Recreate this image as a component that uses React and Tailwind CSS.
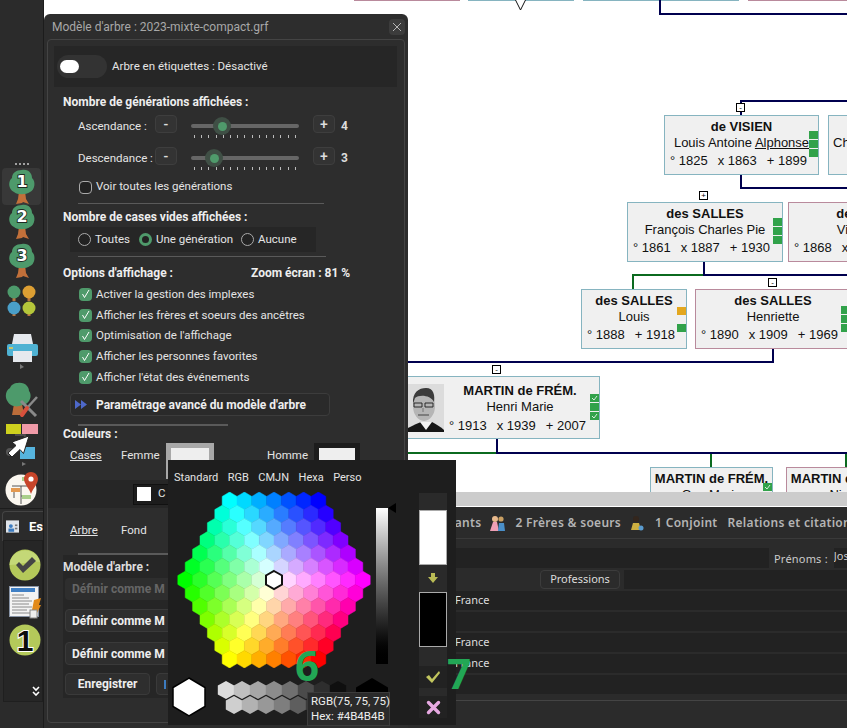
import React from "react"

const UI = "font-['Roboto',sans-serif]"

function Hex({ x, y, w, h, fill, ...rest }) {
  const pts = [
    [x, y - h / 2],
    [x + w / 2, y - h / 4],
    [x + w / 2, y + h / 4],
    [x, y + h / 2],
    [x - w / 2, y + h / 4],
    [x - w / 2, y - h / 4],
  ]
  return <polygon points={pts.map((p) => p.join(",")).join(" ")} fill={fill} {...rest} />
}

function hueColor(h, s) {
  const hh = ((h % 360) + 360) % 360
  const f = (n) => {
    const k = (n + hh / 60) % 6
    return 1 - s * Math.max(0, Math.min(k, 4 - k, 1))
  }
  return `rgb(${Math.round(f(5) * 255)},${Math.round(f(3) * 255)},${Math.round(f(1) * 255)})`
}

function ColorWheel() {
  const w = 14.8
  const dy = 13.2
  const cx = 98
  const cy = 88
  const cells = []
  for (let r = -6; r <= 6; r++) {
    const count = 13 - Math.abs(r)
    for (let i = 0; i < count; i++) {
      const off = i - (count - 1) / 2
      const dist = Math.max(Math.abs(r), Math.abs(off) + Math.abs(r) / 2)
      const angle = (Math.atan2(-r * 0.866, off) * 180) / Math.PI
      const c = hueColor(300 - angle, dist / 6)
      cells.push(<Hex key={`${r}-${i}`} x={cx + off * w} y={cy + r * dy} w={w} h={17.6} fill={c} stroke={c} strokeWidth="0.5" />)
    }
  }
  return (
    <svg width="200" height="176" className="shrink-0">
      {cells}
      <Hex x={cx} y={cy} w={16} h={18} fill="#fff" stroke="#111" strokeWidth="2" />
    </svg>
  )
}

function GrayHexes() {
  const top = ["#dcdcdc", "#c0c0c0", "#a6a6a6", "#8c8c8c", "#707070", "#4b4b4b", "#2e2e2e", "#0f0f0f"]
  const bottom = ["#cfcfcf", "#b2b2b2", "#989898", "#7e7e7e", "#5e5e5e", "#3c3c3c"]
  return (
    <svg width="224" height="46" className="shrink-0">
      <Hex x={17} y={21} w={32} h={38} fill="#fff" stroke="#000" strokeWidth="1.5" />
      {top.map((c, i) => (
        <Hex key={c} x={54 + i * 16} y={14} w={16.4} h={18} fill={c} />
      ))}
      {bottom.map((c, i) => (
        <Hex key={c} x={62 + i * 16} y={29} w={16.4} h={18} fill={c} />
      ))}
      <Hex x={200} y={21} w={32} h={38} fill="#000" />
    </svg>
  )
}

function TreeIcon({ n }) {
  return (
    <svg width="28" height="36" viewBox="0 0 28 36">
      <path d="M11 22 L17 22 L18 30 L21 35 L15 33 L14 34 L8 35 L10 30 Z" fill="#c2703a" />
      <path d="M14 1 C21 0 24 5 24 9 C28 12 27 21 22 23 C18 26 9 26 6 23 C0 20 0 12 4 9 C4 4 8 1 14 1 Z" fill="#4d9a6b" />
      <text
        x="14"
        y="18"
        textAnchor="middle"
        fontSize="16"
        fontWeight="700"
        fontFamily="DejaVu Sans, sans-serif"
        fill="#fff"
        stroke="#1d2b22"
        strokeWidth="1.8"
        paintOrder="stroke"
      >
        {n}
      </text>
    </svg>
  )
}

function FourTrees() {
  const small = [
    [14, 10, "#4d9a6b"],
    [29, 10, "#dd9f33"],
    [14, 26, "#4a9fc9"],
    [29, 26, "#b5c63a"],
  ]
  return (
    <svg width="30" height="32" viewBox="7 1 30 32">
      {small.map(([x, y, c]) => (
        <g key={c}>
          <rect x={x - 1.5} y={y + 3} width="3" height="5" fill="#b8743f" />
          <circle cx={x} cy={y - 1} r="6.5" fill={c} />
        </g>
      ))}
    </svg>
  )
}

function PrinterIcon() {
  return (
    <svg width="32" height="36" viewBox="0 0 32 36">
      <path d="M8 1 H25 L27 11 H6 Z" fill="#e6e9ee" />
      <rect x="1" y="11" width="31" height="12" rx="2" fill="#4fb2d3" />
      <rect x="3" y="14" width="4" height="2" fill="#c9c66b" />
      <rect x="7" y="18" width="19" height="11" fill="#e6e9ee" />
      <path d="M14 31 L18 34 L14 36 Z" fill="#777" />
    </svg>
  )
}

function ToolsTree() {
  return (
    <svg width="34" height="36" viewBox="0 0 34 36">
      <path d="M9 22 H17 L19 33 H7 Z" fill="#bb6d3a" />
      <path d="M13 1 C20 0 24 5 24 9 C28 14 24 23 17 23 C12 26 5 24 3 20 C-1 15 1 8 5 6 C6 3 9 1 13 1 Z" fill="#4d9a6b" />
      <path d="M16 19 L31 34" stroke="#8a8a8a" strokeWidth="3" />
      <path d="M32 15 L22 26" stroke="#8a8a8a" strokeWidth="2.5" />
      <path d="M22 26 L17 33" stroke="#d8503c" strokeWidth="4" strokeLinecap="round" />
    </svg>
  )
}

function BoxesCursor() {
  return (
    <svg width="34" height="42" viewBox="0 0 34 42">
      <rect x="1" y="0" width="15" height="10" fill="#ced11e" />
      <rect x="17" y="0" width="16" height="10" fill="#f09aa8" />
      <rect x="15" y="23" width="15" height="12" fill="#56b4de" />
      <path d="M10 11 H20 V22" stroke="#555" strokeWidth="1.5" fill="none" />
      <circle cx="5" cy="28" r="4" fill="#555" />
      <path d="M24 12 L7 18 L11 21.5 L3 29 L7 33 L15 25.5 L18.5 29.5 Z" fill="#fff" stroke="#222" strokeWidth="1" />
      <path d="M17 38 L21 40 L17 42 Z" fill="#777" />
    </svg>
  )
}

function MapIcon() {
  return (
    <svg width="34" height="34" viewBox="0 0 34 34">
      <circle cx="16" cy="18" r="15.5" fill="#fbf7ef" />
      <path d="M7 14 H22 M16 14 V32 M9 18 V26 M16 24 H24" stroke="#555" strokeWidth="1" fill="none" />
      <rect x="6" y="16" width="9" height="4" fill="#e4994f" />
      <rect x="17" y="5" width="8" height="4" fill="#a9cf8a" />
      <rect x="17" y="23" width="9" height="4" fill="#a9cf8a" />
      <path d="M26 0 C31 0 33 4 33 7 C33 12 28 16 26 22 C24 16 19 12 19 7 C19 4 21 0 26 0 Z" fill="#c7452a" />
      <circle cx="26" cy="7" r="2.6" fill="#fff" />
    </svg>
  )
}

function CheckBall() {
  return (
    <svg width="32" height="32" viewBox="0 0 32 32">
      <circle cx="16" cy="16" r="15.5" fill="#b4c95a" />
      <path d="M0.5 16 A15.5 15.5 0 0 1 31 13 C20 12 10 16 0.5 16 Z" fill="#c4d877" />
      <path d="M7 16 L10 13 L14 17 L23 8 L27 12 L14 24 Z" fill="#454545" />
    </svg>
  )
}

function DocIcon() {
  return (
    <svg width="32" height="33" viewBox="0 0 32 33">
      <rect x="0.5" y="0.5" width="29" height="30" fill="#f3f3f3" stroke="#8793a5" />
      <rect x="2" y="2" width="24" height="4" fill="#3f7fc4" />
      <path d="M3 9 H15 M3 12 H20 M3 15 H23 M3 18 H20 M3 21 H23 M3 24 H18 M3 27 H21" stroke="#8a8a8a" strokeWidth="1" />
      <path d="M25 14 L32 12 L30 19 L32 19 L25 33 L26 24 L23 24 Z" fill="#e28a1a" />
      <rect x="21" y="24" width="7" height="8" fill="#eee" stroke="#888" />
    </svg>
  )
}

function OneBall() {
  return (
    <svg width="32" height="32" viewBox="0 0 32 32">
      <circle cx="16" cy="16" r="15.5" fill="#b4c95a" />
      <text
        x="16"
        y="27"
        textAnchor="middle"
        fontSize="30"
        fontWeight="700"
        fontFamily="Liberation Sans, sans-serif"
        fill="#0c0c0c"
        stroke="#fff"
        strokeWidth="2"
        paintOrder="stroke"
      >
        1
      </text>
    </svg>
  )
}

function Sidebar() {
  return (
    <div className={`absolute left-0 top-0 w-[44px] h-[728px] bg-[#2b2b2b] border-r border-[#1c1c1c] flex flex-col items-center ${UI}`}>
      <div className="mt-[163px] h-[2px] w-[14px] border-t-2 border-dotted border-[#a0a0a0]" />
      <div className="mt-[3px] w-[39px] h-[37px] rounded bg-[#383838] flex items-center justify-center">
        <TreeIcon n="1" />
      </div>
      <div className="mt-[-1px]">
        <TreeIcon n="2" />
      </div>
      <div className="mt-[3px]">
        <TreeIcon n="3" />
      </div>
      <div className="mt-[5px]">
        <FourTrees />
      </div>
      <div className="mt-[17px]">
        <PrinterIcon />
      </div>
      <div className="mt-[13px] ml-[1px]">
        <ToolsTree />
      </div>
      <div className="mt-[6px]">
        <BoxesCursor />
      </div>
      <div className="mt-[6px]">
        <MapIcon />
      </div>
      <div className="mt-[2px] w-full h-[32px] border-t border-[#1c1c1c] pl-[2px]">
        <div className="mt-[2px] h-[30px] border-l border-t border-[#444] rounded-tl flex items-center pl-[3px] gap-[10px]">
          <svg width="16" height="15" viewBox="0 0 16 15">
            <rect width="16" height="15" fill="#dfe4ea" />
            <circle cx="6" cy="7" r="2.4" fill="#3d7cc0" />
            <rect x="3" y="10" width="7" height="4" fill="#3d7cc0" />
            <rect x="11" y="5" width="3" height="2" fill="#777" />
            <rect x="11" y="9" width="3" height="2" fill="#777" />
          </svg>
          <span className="text-[13px] font-bold text-white">Es</span>
        </div>
      </div>
      <div className="w-[40px] ml-[2px] h-[162px] border border-[#1f1f1f] bg-[#262626] flex flex-col items-end pr-[1px]">
        <div className="mt-[8px]">
          <CheckBall />
        </div>
        <div className="mt-[5px]">
          <DocIcon />
        </div>
        <div className="mt-[5px]">
          <OneBall />
        </div>
        <svg className="mt-[30px] mr-[1px]" width="8" height="10" viewBox="0 0 8 10">
          <path d="M1 1 L4 4 L7 1 M1 6 L4 9 L7 6" stroke="#fff" strokeWidth="1.6" fill="none" />
        </svg>
      </div>
    </div>
  )
}

function SmallButton({ label }) {
  return (
    <div className="w-[22px] h-[18px] -mt-[4px] rounded bg-[#333] border border-[#3e3e3e] flex items-center justify-center text-[14px] font-medium leading-none text-[#ddd]">
      {label}
    </div>
  )
}

function SliderRow({ label, value, pos }) {
  const ticks = Array.from({ length: 15 })
  return (
    <div className="h-[32px] flex items-center">
      <span className="ml-[30px] mt-px w-[77px] text-[11.5px] whitespace-nowrap text-[#e4e4e4]">{label}</span>
      <SmallButton label="-" />
      <div className="relative ml-[14px] w-[108px] h-[4px] rounded-full bg-[#666]">
        <div className={`absolute -top-[7px] w-[18px] h-[18px] rounded-full bg-[#3f4f45] flex items-center justify-center ${pos}`}>
          <div className="w-[9px] h-[9px] rounded-full bg-[#4f9a6b]" />
        </div>
        <div className="absolute left-[3px] right-[3px] top-[11px] flex justify-between">
          {ticks.map((_, i) => (
            <div key={i} className="w-px h-[3px] bg-[#bbb]" />
          ))}
        </div>
      </div>
      <div className="ml-[14px]">
        <SmallButton label="+" />
      </div>
      <span className="ml-[6px] text-[12px] font-bold text-[#ddd]">{value}</span>
    </div>
  )
}

function Check() {
  return (
    <div className="w-[13px] h-[13px] rounded-sm bg-[#4f9a6b] flex items-center justify-center shrink-0">
      <svg width="9" height="10" viewBox="0 0 9 10">
        <path d="M1.5 5 L3.5 8.5 L8 1" stroke="#fff" strokeWidth="1" fill="none" />
      </svg>
    </div>
  )
}

function Radio({ checked, label, width }) {
  return (
    <div className={`flex items-center gap-[4px] ${width}`}>
      {checked ? (
        <div className="w-[13px] h-[13px] rounded-full border-[3px] border-[#4f9a6b] bg-[#222]" />
      ) : (
        <div className="w-[13px] h-[13px] rounded-full border border-[#aaa] bg-[#222]" />
      )}
      <span className="text-[11.5px] text-[#e4e4e4] whitespace-nowrap">{label}</span>
    </div>
  )
}

const displayOptions = [
  "Activer la gestion des implexes",
  "Afficher les frères et soeurs des ancêtres",
  "Optimisation de l'affichage",
  "Afficher les personnes favorites",
  "Afficher l'état des événements",
]

function ModelPanel() {
  return (
    <div className={`absolute left-[44px] top-[14px] w-[364px] h-[714px] rounded-t-md bg-[#2d2d2d] ${UI}`}>
      <div className="h-[25px] pl-[8px] pr-[3px] flex items-center justify-between">
        <span className="text-[12px] text-[#a8a8a8]">Modèle d'arbre : 2023-mixte-compact.grf</span>
        <div className="w-[16px] h-[16px] rounded-sm bg-[#3c3c3c] flex items-center justify-center">
          <svg width="10" height="10" viewBox="0 0 10 10">
            <path d="M1 1 L9 9 M9 1 L1 9" stroke="#b5b5b5" strokeWidth="1" />
          </svg>
        </div>
      </div>

      <div className="mx-[3px] h-[684px] border border-[#444] rounded-sm">
        <div className="mt-[6px] ml-[6px] w-[343px] h-[41px] bg-[#262626] flex items-center pl-[3px]">
          <div className="w-[50px] h-[23px] rounded-full bg-[#333] flex items-center pl-[3px]">
            <div className="w-[19px] h-[13px] rounded-full bg-white" />
          </div>
          <span className="ml-[5px] mt-px text-[11.5px] text-[#e4e4e4]">Arbre en étiquettes : Désactivé</span>
        </div>

        <div className="mt-[7px] ml-[15px] h-[16px] flex items-center text-[12px] font-bold text-[#eee]">
          Nombre de générations affichées :
        </div>
        <SliderRow label="Ascendance :" value="4" pos="left-[22px]" />
        <SliderRow label="Descendance :" value="3" pos="left-[14px]" />
        <div className="h-[26px] ml-[31px] flex items-center gap-[4px]">
          <div className="w-[13px] h-[13px] rounded-sm border border-[#aaa] bg-[#222]" />
          <span className="text-[11.5px] text-[#e4e4e4]">Voir toutes les générations</span>
        </div>
        <div className="mt-[3px] ml-[30px] w-[246px] h-px bg-[#5a5a5a]" />

        <div className="mt-[5px] ml-[15px] h-[16px] flex items-center text-[12px] font-bold text-[#eee]">
          Nombre de cases vides affichées :
        </div>
        <div className="mt-[2px] ml-[22px] w-[246px] h-[25px] bg-[#262626] flex items-center pl-[8px]">
          <Radio label="Toutes" width="w-[61px]" />
          <Radio checked label="Une génération" width="w-[102px]" />
          <Radio label="Aucune" width="w-[70px]" />
        </div>
        <div className="mt-[4px] ml-[30px] w-[248px] h-px bg-[#5a5a5a]" />

        <div className="mt-[8px] ml-[15px] h-[16px] flex items-center text-[12px] font-bold text-[#eee]">
          <span className="w-[188px]">Options d'affichage :</span>
          <span>Zoom écran : 81 %</span>
        </div>
        <div className="mt-[3px] ml-[31px] flex flex-col">
          {displayOptions.map((o) => (
            <div key={o} className="h-[20.75px] flex items-center gap-[4px]">
              <Check />
              <span className="text-[11.5px] text-[#e4e4e4]">{o}</span>
            </div>
          ))}
        </div>

        <div className="mt-[5.25px] ml-[22px] w-[260px] h-[23px] rounded bg-[#2a2a2a] border border-[#3c3c3c] flex items-center pl-[4px]">
          <svg width="12" height="9" viewBox="0 0 12 9">
            <path d="M0 0 L6 4.5 L0 9 Z M6 0 L12 4.5 L6 9 Z" fill="#4d68c9" />
          </svg>
          <span className="ml-[9px] text-[12px] font-bold whitespace-nowrap text-[#eee]">Paramétrage avancé du modèle d'arbre</span>
        </div>
        <div className="mt-[8px] ml-[30px] w-[150px] h-[2px] bg-[#5a5a5a]" />

        <div className="ml-[15px] h-[15px] flex items-center text-[12px] font-bold text-[#eee]">Couleurs :</div>
        <div className="h-[39px] flex items-start">
          <span className="ml-[22px] mt-[6px] w-[51px] text-[11.5px] text-[#e4e4e4] underline">Cases</span>
          <span className="mt-[6px] w-[45px] text-[11.5px] text-[#e4e4e4]">Femme</span>
          <div className="mt-[2px] w-[48px] h-[36px] bg-[#a8a8a8] p-[5px]">
            <div className="h-full bg-[#eeeeee]" />
          </div>
          <span className="ml-[53px] mt-[6px] w-[47px] text-[11.5px] text-[#e4e4e4]">Homme</span>
          <div className="mt-[2px] w-[46px] h-[36px] bg-[#1c1c1c] p-[5px]">
            <div className="h-full bg-[#eeeeee]" />
          </div>
        </div>

        <div className="h-[28px] bg-[#262626] flex items-center pl-[85px]">
          <div className="w-[160px] h-[21px] bg-[#1c1c1c] border border-[#111] flex items-center pl-[3px] gap-[7px]">
            <div className="w-[14px] h-[14px] bg-white" />
            <span className="text-[11.5px] text-[#e4e4e4]">C</span>
          </div>
        </div>

        <div className="h-[45px] flex items-center text-[11.5px] text-[#e4e4e4]">
          <span className="ml-[22px] w-[51px] underline">Arbre</span>
          <span>Fond</span>
        </div>
        <div className="ml-[30px] w-[248px] h-[2px] bg-[#5a5a5a]" />

        <div className="ml-[15px] w-[330px] h-[143px] bg-[#262626] flex flex-col">
          <div className="h-[23px] flex items-center text-[12px] font-bold text-[#ddd]">Modèle d'arbre :</div>
          <div className="ml-[2px] w-[300px] h-[22px] rounded bg-[#2e2e2e] pl-[7px] flex items-center text-[12px] font-bold text-[#666]">
            Définir comme M
          </div>
          <div className="mt-[9px] ml-[2px] w-[300px] h-[23px] rounded bg-[#2e2e2e] border border-[#3a3a3a] pl-[6px] flex items-center text-[12px] font-bold text-[#eee]">
            Définir comme M
          </div>
          <div className="mt-[10px] ml-[2px] w-[300px] h-[23px] rounded bg-[#2e2e2e] border border-[#3a3a3a] pl-[6px] flex items-center text-[12px] font-bold text-[#eee]">
            Définir comme M
          </div>
          <div className="mt-[8px] ml-[2px] flex gap-[6px]">
            <div className="w-[85px] h-[22px] rounded bg-[#2e2e2e] border border-[#3a3a3a] flex items-center justify-center text-[12px] font-bold text-[#eee]">
              Enregistrer
            </div>
            <div className="w-[120px] h-[22px] rounded bg-[#2e2e2e] border border-[#3a3a3a] pl-[7px] flex items-center">
              <div className="w-[2px] h-[9px] bg-[#3d7cc0]" />
            </div>
          </div>
        </div>
      </div>
    </div>
  )
}

function ColorPicker() {
  return (
    <div className={`absolute left-[168px] top-[460px] w-[288px] h-[265px] bg-[#1e1e1e] flex ${UI}`}>
      <div className="w-[251px] flex flex-col">
        <div className="h-[32px] pl-[6px] pt-[5px] flex items-center gap-[9.5px] text-[11px] text-[#e4e4e4]">
          <span>Standard</span>
          <span>RGB</span>
          <span>CMJN</span>
          <span>Hexa</span>
          <span>Perso</span>
        </div>
        <div className="h-[184px] pl-[8px] flex">
          <ColorWheel />
          <div className="relative mt-[16px] w-[12px] h-[156px] bg-gradient-to-b from-white to-black">
            <div className="absolute left-[12px] -top-[5px] w-0 h-0 border-y-[5px] border-y-transparent border-r-[8px] border-r-black" />
          </div>
        </div>
        <div className="pl-[4px]">
          <GrayHexes />
        </div>
      </div>
      <div className="mt-[33px] w-[28px] h-[225px] bg-[#2a2a2a] flex flex-col items-center">
        <div className="mt-[17px] w-full h-[55px] bg-white border border-[#aaa]" />
        <svg className="mt-[7px]" width="12" height="12" viewBox="0 0 12 12">
          <path d="M4 1 H8 V5 H11 L6 11 L1 5 H4 Z" fill="#b9bb55" />
        </svg>
        <div className="mt-[8px] w-full h-[55px] bg-black border border-[#aaa]" />
        <div className="mt-[19px] w-full h-[22px] bg-[#222] flex items-center justify-center">
          <svg width="16" height="14" viewBox="0 0 16 14">
            <path d="M1 7 L4 5 L7 9 L14 1 L15 3 L7 13 Z" fill="#c2c65e" />
          </svg>
        </div>
        <div className="mt-[8px] w-full h-[22px] bg-[#222] flex items-center justify-center">
          <svg width="15" height="15" viewBox="0 0 15 15">
            <path d="M2.5 2.5 L12.5 12.5 M12.5 2.5 L2.5 12.5" stroke="#e7a9e2" strokeWidth="3.4" strokeLinecap="round" />
          </svg>
        </div>
      </div>

      <div className="absolute left-[139px] top-[232px] w-[83px] h-[34px] bg-[#2a2a2a] border border-[#3c3c3c] pl-[3px] text-[11.5px] leading-[15px] whitespace-nowrap text-[#eee] flex flex-col justify-center">
        <span>RGB(75, 75, 75)</span>
        <span>Hex: #4B4B4B</span>
      </div>
    </div>
  )
}

function DetailWindow() {
  const rows = ["France", "", "France", "France", ""]
  return (
    <div className="absolute left-[408px] right-0 top-[492px] bottom-0 bg-[#2b2b2b] font-['Noto_Sans',sans-serif]">
      <div className="h-[15px] bg-[#cccccc] border-b border-white" />
      <div className="h-[32px] border-b border-[#3a3a3a] overflow-hidden flex items-center pl-[27px] text-xs font-semibold text-[#b4b4b4] whitespace-nowrap tracking-[0.3px]">
        <span>Enfants</span>
        <svg className="ml-[8px] shrink-0" width="17" height="16" viewBox="0 0 17 16">
          <circle cx="6" cy="4" r="3" fill="#e8b98c" />
          <path d="M1 16 L4 7 H8 L10 16 Z" fill="#ee9fb4" />
          <circle cx="12" cy="4" r="2.6" fill="#caa063" />
          <path d="M9 16 L10 8 H15 L16 16 Z" fill="#4a8fc9" />
        </svg>
        <span className="ml-[9px]">2 Frères &amp; soeurs</span>
        <svg className="ml-[9px] shrink-0" width="14" height="16" viewBox="0 0 14 16">
          <circle cx="6" cy="4" r="3" fill="#33261d" />
          <path d="M1 15 L3 8 H9 L11 15 Z" fill="#cdb041" />
          <circle cx="11" cy="13" r="2.5" fill="#5a9bcf" />
        </svg>
        <span className="ml-[11px]">1 Conjoint</span>
        <span className="ml-[10px]">Relations et citations</span>
      </div>
      <div className="mt-[9px] h-[20px] flex items-center">
        <div className="w-[361px] h-full bg-[#222]" />
        <span className="ml-[5px] mt-[2px] text-[11px] tracking-[0.2px] text-[#ccc] whitespace-nowrap">Prénoms :</span>
        <div className="ml-[6px] flex-1 h-full bg-[#222] text-[11px] text-[#ccc] overflow-hidden">Jos</div>
      </div>
      <div className="mt-[2px] h-[19px] flex">
        <div className="ml-[132px] w-[80px] rounded border border-[#3c3c3c] bg-[#2b2b2b] flex items-center justify-center text-[11px] text-[#ddd]">
          Professions
        </div>
        <div className="ml-[4px] flex-1 bg-[#222]" />
      </div>
      {rows.map((r, i) => (
        <div key={i} className="mt-[2px] h-[19px] bg-[#222] pl-[47px] flex items-center text-[11px] text-[#ddd]">
          {r}
        </div>
      ))}
      <div className="mt-[6px] h-px bg-[#444]" />
    </div>
  )
}

function Marks({ marks, position }) {
  return (
    <div className={`absolute flex flex-col gap-px ${position}`}>
      {marks.map((m, i) => (
        <div key={i} className="w-[9px] h-[8px] bg-[#31a24a] flex items-center justify-center">
          {m ? (
            <svg width="7" height="6" viewBox="0 0 7 6">
              <path d="M1 3 L3 5 L6 1" stroke="#fff" strokeWidth="0.8" fill="none" />
            </svg>
          ) : null}
        </div>
      ))}
    </div>
  )
}

function Node({ box, tone, name, given, dates, children, underline }) {
  const border = tone === "f" ? "border-[#b98a9c]" : "border-[#86b4c0]"
  return (
    <div className={`absolute bg-[#f0f0f0] border ${border} overflow-hidden ${box}`}>
      <div className="h-[16px] mt-[3px] text-[13px] leading-[16px] font-bold text-center text-[#111] whitespace-nowrap">{name}</div>
      <div className="h-[16px] text-[13px] leading-[16px] text-center text-[#111] whitespace-nowrap">
        {given}
        {underline ? <span className="underline">{underline}</span> : null}
      </div>
      {dates && (
        <div className="mt-[2px] h-[16px] flex gap-[10px] pl-[5px] text-[13px] leading-[16px] text-[#111] whitespace-nowrap">
          {dates.map((d) => (
            <span key={d}>{d}</span>
          ))}
        </div>
      )}
      {children}
    </div>
  )
}

function Marker({ pos, sign }) {
  return (
    <div className={`absolute w-[9px] h-[9px] bg-white border border-black flex items-center justify-center text-[8px] leading-none text-black ${pos}`}>
      {sign}
    </div>
  )
}

function Portrait() {
  return (
    <svg className="absolute left-0 top-[7px]" width="36" height="48" viewBox="0 0 36 48">
      <defs>
        <filter id="soft">
          <feGaussianBlur stdDeviation="0.6" />
        </filter>
      </defs>
      <rect width="36" height="48" fill="#dcdcdc" />
      <g filter="url(#soft)">
        <path d="M0 48 L0 44 C6 41 10 39 13 38 L24 38 C28 40 33 43 36 46 L36 48 Z" fill="#161616" />
        <path d="M12 38 L18 46 L24 38 Z" fill="#f4f4f4" />
        <ellipse cx="16" cy="22" rx="11" ry="15" fill="#b5b5b5" />
        <path d="M5 20 C4 8 11 4 18 4 C26 4 27 12 26 18 C23 11 11 10 7 14 Z" fill="#3a3a3a" />
        <path d="M6 19 H14 V23 H6 Z M17 19 H25 V23 H17 Z" fill="none" stroke="#2a2a2a" strokeWidth="1" />
        <path d="M10 31 H21" stroke="#555" strokeWidth="1.2" />
        <path d="M15 24 V28" stroke="#777" />
      </g>
    </svg>
  )
}

function TreeCanvas() {
  const navy = "absolute bg-[#00004f]"
  const green = "absolute bg-[#0b6a1f]"
  return (
    <div className="absolute inset-0 bg-white font-['Liberation_Sans',sans-serif]">
      <div className="absolute left-[354px] top-0 w-[106px] h-px bg-[#b98a9c]" />
      <div className="absolute left-[468px] top-0 w-[106px] h-px bg-[#86b4c0]" />
      <div className="absolute left-[583px] top-0 w-[156px] h-px bg-[#86b4c0]" />
      <div className="absolute left-[748px] top-0 right-0 h-px bg-[#b98a9c]" />
      <svg className="absolute left-[515px] top-0" width="11" height="11" viewBox="0 0 11 11">
        <path d="M0.5 0 L5.5 10 L10.5 0" fill="white" stroke="#111" />
      </svg>

      <div className={`${navy} left-[659px] top-0 w-[2px] h-[15px]`} />
      <div className={`${navy} left-[659px] top-[13px] right-0 h-[2px]`} />

      <div className={`${navy} left-[740px] top-[100px] w-[2px] h-[15px]`} />
      <div className={`${navy} left-[740px] top-[100px] right-0 h-[2px]`} />
      <div className={`${navy} left-[740px] top-[175px] w-[2px] h-[14px]`} />
      <div className={`${navy} left-[740px] top-[187px] right-0 h-[2px]`} />

      <div className={`${navy} left-[703px] top-[262px] w-[2px] h-[14px]`} />
      <div className={`${navy} left-[703px] top-[274px] right-0 h-[2px]`} />
      <div className={`${green} left-[632px] top-[274px] w-[71px] h-[2px]`} />
      <div className={`${green} left-[632px] top-[274px] w-[2px] h-[15px]`} />
      <div className={`${navy} left-[772px] top-[349px] w-[2px] h-[14px]`} />
      <div className={`${navy} left-[400px] top-[361px] w-[374px] h-[2px]`} />

      <div className={`${navy} left-[496px] top-[439px] w-[2px] h-[14px]`} />
      <div className={`${navy} left-[496px] top-[452px] right-0 h-[2px]`} />
      <div className={`${green} left-[400px] top-[452px] w-[96px] h-[2px]`} />
      <div className={`${green} left-[710px] top-[454px] w-[2px] h-[13px]`} />
      <div className={`${green} left-[845px] top-[454px] w-[2px] h-[13px]`} />

      <Marker pos="left-[736px] top-[103px]" sign="-" />
      <Marker pos="left-[699px] top-[191px]" sign="+" />
      <Marker pos="left-[768px] top-[278px]" sign="-" />
      <Marker pos="left-[492px] top-[365px]" sign="-" />

      <Node box="left-[664px] top-[115px] w-[155px] h-[60px]" name="de VISIEN" given="Louis Antoine " underline="Alphonse" dates={["° 1825", "x 1863", "+ 1899"]}>
        <Marks marks={[0, 0, 0]} position="right-0 top-[15px]" />
      </Node>
      <div className="absolute left-[828px] top-[115px] w-[100px] h-[60px] bg-[#f0f0f0] border border-[#86b4c0] pl-[4px] pt-[19px] text-[13px] leading-[16px] text-[#111] overflow-hidden">
        Charles
      </div>
      <Node box="left-[627px] top-[202px] w-[156px] h-[60px]" name="des SALLES" given="François Charles Pie" dates={["° 1861", "x 1887", "+ 1930"]}>
        <Marks marks={[0, 0, 0]} position="right-0 top-[15px]" />
      </Node>
      <Node box="left-[788px] top-[202px] w-[174px] h-[60px]" tone="f" name="des SALLES" given="Victoire Anne" dates={["° 1868", "x 1887", "+ 1930"]} />
      <Node box="left-[581px] top-[289px] w-[106px] h-[60px]" name="des SALLES" given="Louis" dates={["° 1888", "+ 1918"]}>
        <div className="absolute right-0 top-[17px] w-[9px] h-[8px] bg-[#e3a71f]" />
        <div className="absolute right-0 top-[34px] w-[9px] h-[8px] bg-[#31a24a]" />
      </Node>
      <Node box="left-[695px] top-[289px] w-[156px] h-[60px]" tone="f" name="des SALLES" given="Henriette" dates={["° 1890", "x 1909", "+ 1969"]}>
        <Marks marks={[0, 0, 0]} position="right-0 top-[16px]" />
      </Node>
      <div className="absolute left-[400px] top-[376px] w-[200px] h-[63px] bg-[#f0f0f0] border border-[#86b4c0]">
        <div className="absolute left-[7px] top-0 w-[36px] h-full">
          <Portrait />
        </div>
        <div className="ml-[46px] mr-[6px] mt-[6px] h-[16px] text-[13px] leading-[16px] font-bold text-center text-[#111] whitespace-nowrap">
          MARTIN de FRÉM.
        </div>
        <div className="ml-[46px] mr-[6px] h-[15px] text-[13px] leading-[16px] text-center text-[#111]">Henri Marie</div>
        <div className="ml-[48px] mt-[4px] flex gap-[10px] text-[13px] leading-[16px] text-[#111] whitespace-nowrap">
          <span>° 1913</span>
          <span>x 1939</span>
          <span>+ 2007</span>
        </div>
        <Marks marks={[1, 0, 1]} position="right-0 top-[17px]" />
      </div>
      <Node box="left-[650px] top-[467px] w-[123px] h-[40px]" name="MARTIN de FRÉM." given="Guy Marie">
        <Marks marks={[1]} position="right-0 top-[15px]" />
      </Node>
      <Node box="left-[786px] top-[467px] w-[123px] h-[40px]" tone="f" name="MARTIN de FRÉM." given="Nicole" />
    </div>
  )
}

export default function App() {
  return (
    <div className="relative w-[847px] h-[728px] overflow-hidden bg-white">
      <TreeCanvas />
      <DetailWindow />
      <Sidebar />
      <ModelPanel />
      <ColorPicker />
      <span className="absolute left-[295px] top-[641px] text-[42px] leading-[48px] font-bold text-[#22a755] font-['Open_Sans',sans-serif]">6</span>
      <span className="absolute left-[447px] top-[649px] text-[42px] leading-[48px] font-bold text-[#22a755] font-['Open_Sans',sans-serif]">7</span>
    </div>
  )
}
